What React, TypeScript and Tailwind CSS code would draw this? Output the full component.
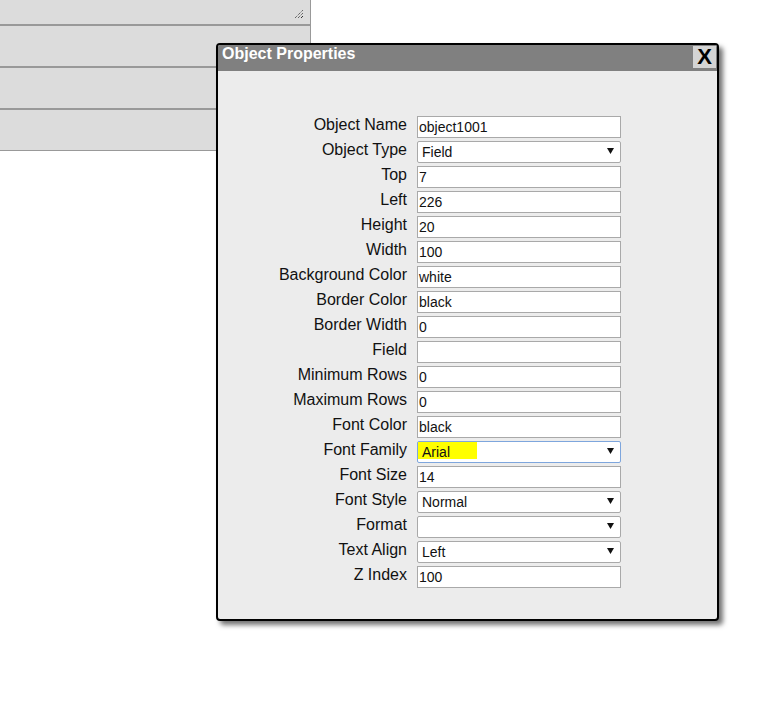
import React from "react";

type Row = { label: string; value: string; kind: "input" | "select"; focus?: boolean };

const rows: Row[] = [
  { label: "Object Name", value: "object1001", kind: "input" },
  { label: "Object Type", value: "Field", kind: "select" },
  { label: "Top", value: "7", kind: "input" },
  { label: "Left", value: "226", kind: "input" },
  { label: "Height", value: "20", kind: "input" },
  { label: "Width", value: "100", kind: "input" },
  { label: "Background Color", value: "white", kind: "input" },
  { label: "Border Color", value: "black", kind: "input" },
  { label: "Border Width", value: "0", kind: "input" },
  { label: "Field", value: "", kind: "input" },
  { label: "Minimum Rows", value: "0", kind: "input" },
  { label: "Maximum Rows", value: "0", kind: "input" },
  { label: "Font Color", value: "black", kind: "input" },
  { label: "Font Family", value: "Arial", kind: "select", focus: true },
  { label: "Font Size", value: "14", kind: "input" },
  { label: "Font Style", value: "Normal", kind: "select" },
  { label: "Format", value: "", kind: "select" },
  { label: "Text Align", value: "Left", kind: "select" },
  { label: "Z Index", value: "100", kind: "input" },
];

function Arrow() {
  return (
    <svg width="7" height="6" viewBox="0 0 7 6" className="absolute right-[6px] top-[6px]">
      <polygon points="0,0 7,0 3.5,6" fill="#111" />
    </svg>
  );
}

function Field({ row }: { row: Row }) {
  if (row.kind === "input") {
    return (
      <div className="w-[204px] h-[22px] border border-[#a9a9a9] bg-white pl-[1px] text-[14px] leading-[20px] text-[#111] whitespace-nowrap overflow-hidden">
        {row.value}
      </div>
    );
  }
  return (
    <div
      className={
        "relative w-[204px] h-[22px] border bg-white rounded-[2px] text-[14px] leading-[20px] text-[#111] whitespace-nowrap " +
        (row.focus ? "border-[#7ea6dd]" : "border-[#a9a9a9]")
      }
    >
      {row.focus ? (
        <div className="absolute left-0 top-0 w-[59px] h-[17px] bg-[#ffff00]" />
      ) : null}
      <span className="relative pl-[4px]">{row.value}</span>
      <Arrow />
    </div>
  );
}

function Grip() {
  return (
    <svg width="10" height="10" viewBox="0 0 10 10" className="absolute right-[6px] bottom-[5px]">
      <line x1="1" y1="9" x2="9" y2="1" stroke="#333" strokeWidth="1" strokeDasharray="1 1" />
      <line x1="4" y1="9" x2="9" y2="4" stroke="#333" strokeWidth="1" strokeDasharray="1 1" />
      <line x1="7" y1="9" x2="9" y2="7" stroke="#333" strokeWidth="1" />
    </svg>
  );
}

export default function App() {
  return (
    <div
      className="relative w-[781px] h-[701px] bg-white overflow-hidden"
      style={{ fontFamily: '"Liberation Sans", Arial, sans-serif' }}
    >
      <div className="flex flex-col w-[311px]">
        <div className="relative h-[25px] bg-[#dcdcdc] border-b border-r border-[#999]">
          <Grip />
        </div>
        <div className="h-[42px] bg-[#dcdcdc] border-y border-r border-[#999]" />
        <div className="h-[42px] bg-[#dcdcdc] border-y border-r border-[#999]" />
        <div className="h-[42px] bg-[#dcdcdc] border-y border-r border-[#999]" />
      </div>

      <div className="absolute left-[216px] top-[43px] w-[503px] h-[578px] border-2 border-black rounded-[4px] overflow-hidden bg-[#ececec] shadow-[4px_4px_5px_rgba(0,0,0,0.55)] flex flex-col">
        <div className="relative h-[26px] bg-[#808080] shrink-0">
          <div className="pl-[4px] text-white font-bold text-[16px] leading-[18px]">Object Properties</div>
          <div className="absolute right-[1px] top-[1px] w-[23px] h-[22px] bg-[#d4d4d4] flex items-center justify-center text-black font-bold text-[22px] leading-none">
            X
          </div>
        </div>
        <div className="flex flex-col gap-[3px] pt-[45px]">
          {rows.map((r) => (
            <div key={r.label} className="flex items-start gap-[10px]">
              <div className="w-[189px] text-right text-[16px] leading-[18px] text-[#111] whitespace-nowrap">
                {r.label}
              </div>
              <Field row={r} />
            </div>
          ))}
        </div>
      </div>
    </div>
  );
}
